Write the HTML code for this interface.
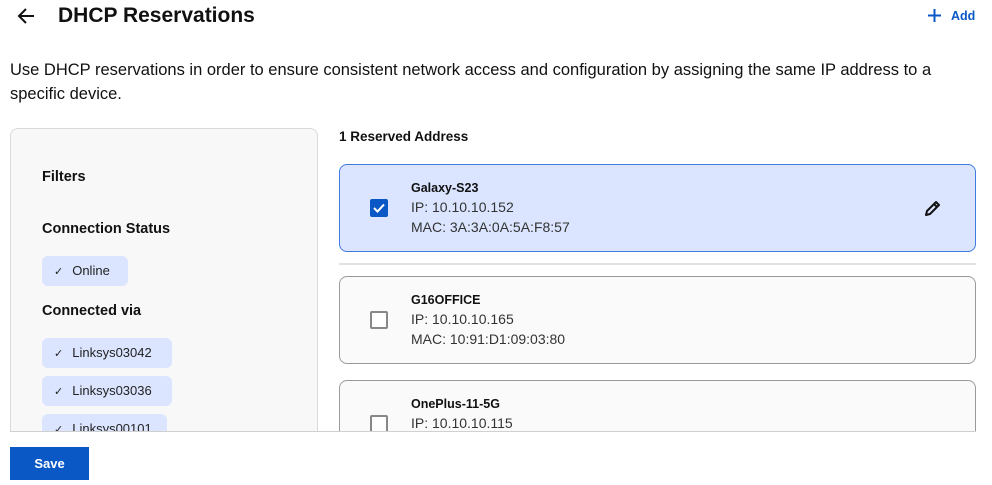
<!DOCTYPE html>
<html><head><style>
*{box-sizing:border-box;margin:0;padding:0}
body{width:992px;height:485px;background:#fff;font-family:"Liberation Sans",Arial,sans-serif;color:#111;position:relative;overflow:hidden}
.abs{position:absolute}
h1{position:absolute;left:58px;top:4px;font-size:21px;font-weight:bold;color:#111}
.desc{position:absolute;left:10px;top:58px;font-size:16.5px;line-height:24px;color:#111;width:960px}
.panel{position:absolute;left:10px;top:128px;width:308px;height:320px;background:#f8f8f8;border:1px solid #d8d8d8;border-radius:8px}
.lbl{position:absolute;font-size:14.5px;font-weight:bold;color:#111}
.chip{position:absolute;left:42px;height:30px;background:#dbe5ff;border-radius:6px;font-size:13px;line-height:30px;padding-left:12px;padding-right:12px;color:#222}
.chip span{margin-right:9px;font-size:11px}
.card{position:absolute;left:339px;width:637px;height:88px;border:1px solid #9a9a9a;border-radius:8px;background:#fafafa}
.card.sel{background:#dbe5ff;border:1.5px solid #3f7be0}
.name{position:absolute;left:71px;top:16px;font-size:12.5px;font-weight:bold}
.line{position:absolute;left:71px;font-size:14px;color:#333}
.cb{position:absolute;left:30px;top:34px;width:18px;height:18px;border:2px solid #888;border-radius:2px;background:#fff}
.cb.on{background:#0a57c6;border-color:#0a57c6}
.clip{position:absolute;left:0;top:431px;width:992px;height:54px;background:#fff}
.save{position:absolute;left:10px;top:447px;width:79px;height:33px;background:#0a57c6;color:#fff;font-weight:bold;font-size:13px;text-align:center;line-height:33px}
</style></head><body>
<svg class="abs" style="left:16px;top:6px" width="20" height="20" viewBox="0 0 20 20"><path d="M18 10H3M10 3L3 10l7 7" stroke="#111" stroke-width="2" fill="none"/></svg>
<h1>DHCP Reservations</h1>
<svg class="abs" style="left:927px;top:8px" width="15" height="15" viewBox="0 0 15 15"><path d="M7.5 1v13M1 7.5h13" stroke="#0a57c6" stroke-width="2"/></svg>
<div class="abs" style="left:951px;top:9px;font-size:12.5px;font-weight:bold;color:#0a57c6">Add</div>
<div class="desc">Use DHCP reservations in order to ensure consistent network access and configuration by assigning the same IP address to a specific device.</div>
<div class="panel"></div>
<div class="lbl" style="left:42px;top:169px">Filters</div>
<div class="lbl" style="left:42px;top:221px">Connection Status</div>
<div class="chip" style="top:256px;width:86px"><span>✓</span>Online</div>
<div class="lbl" style="left:42px;top:303px">Connected via</div>
<div class="chip" style="top:338px;width:130px"><span>✓</span>Linksys03042</div>
<div class="chip" style="top:376px;width:130px"><span>✓</span>Linksys03036</div>
<div class="chip" style="top:414px;width:125px"><span>✓</span>Linksys00101</div>
<div class="lbl" style="left:339px;top:129px;font-size:13.5px">1 Reserved Address</div>
<div class="card sel" style="top:164px">
 <div class="cb on"><svg width="14" height="14" viewBox="0 0 14 14" style="position:absolute;left:0;top:0"><path d="M2 7l3.5 3.5L12 3.5" stroke="#fff" stroke-width="2" fill="none"/></svg></div>
 <div class="name">Galaxy-S23</div>
 <div class="line" style="top:34px">IP: 10.10.10.152</div>
 <div class="line" style="top:54px">MAC: 3A:3A:0A:5A:F8:57</div>
 <svg style="position:absolute;left:583px;top:33px" width="20" height="20" viewBox="0 0 20 20"><path d="M3 17l1-4L13 4l3 3-9 9z" stroke="#111" stroke-width="2" fill="none" stroke-linejoin="round"/><path d="M11 6l3 3" stroke="#111" stroke-width="2"/></svg>
</div>
<div class="abs" style="left:339px;top:263px;width:637px;height:2px;background:#e2e2e2"></div>
<div class="card" style="top:276px">
 <div class="cb"></div>
 <div class="name">G16OFFICE</div>
 <div class="line" style="top:34px">IP: 10.10.10.165</div>
 <div class="line" style="top:54px">MAC: 10:91:D1:09:03:80</div>
</div>
<div class="card" style="top:380px">
 <div class="cb"></div>
 <div class="name">OnePlus-11-5G</div>
 <div class="line" style="top:34px">IP: 10.10.10.115</div>
</div>
<div class="clip"></div>
<div class="abs" style="left:10px;top:431px;width:966px;height:1px;background:#d0d0d0"></div>
<div class="save">Save</div>
</body></html>
